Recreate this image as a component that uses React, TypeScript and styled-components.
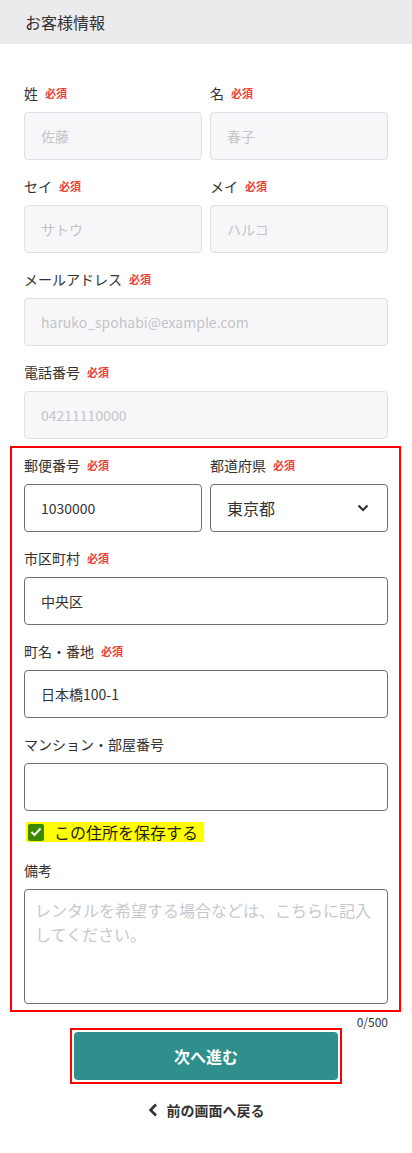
import styled, { createGlobalStyle } from 'styled-components'

const GlobalStyle = createGlobalStyle`
    body {
        margin: 0;
        background: #fff;
        font-family: "Noto Sans CJK JP", "Noto Sans", sans-serif;
        color: #333;
    }
    * { box-sizing: border-box; }
`

export default function App() {
    return <Page>
        <GlobalStyle/>
        <Header>お客様情報</Header>
        <Form>
            <Stack>
                <Row>
                    <Field label="姓" required><Input disabled placeholder="佐藤"/></Field>
                    <Field label="名" required><Input disabled placeholder="春子"/></Field>
                </Row>
                <Row>
                    <Field label="セイ" required><Input disabled placeholder="サトウ"/></Field>
                    <Field label="メイ" required><Input disabled placeholder="ハルコ"/></Field>
                </Row>
                <Field label="メールアドレス" required>
                    <Input disabled placeholder="haruko_spohabi@example.com"/>
                </Field>
                <Field label="電話番号" required>
                    <Input disabled placeholder="04211110000"/>
                </Field>
            </Stack>

            <Highlight>
                <Stack>
                    <Row>
                        <Field label="郵便番号" required><Input defaultValue="1030000"/></Field>
                        <Field label="都道府県" required>
                            <SelectBox>
                                <span>東京都</span>
                                <svg width="12" height="8" viewBox="0 0 12 8">
                                    <polyline points="1.5,1.5 6,6 10.5,1.5" fill="none" stroke="#333" strokeWidth="2.2"/>
                                </svg>
                            </SelectBox>
                        </Field>
                    </Row>
                    <Field label="市区町村" required><Input defaultValue="中央区"/></Field>
                    <Field label="町名・番地" required><Input defaultValue="日本橋100-1"/></Field>
                    <Field label="マンション・部屋番号"><Input/></Field>
                </Stack>
                <SaveCheck>
                    <Box>
                        <svg width="12" height="10" viewBox="0 0 12 10">
                            <polyline points="1.5,5 4.5,8 10.5,1.5" fill="none" stroke="#fff" strokeWidth="2"/>
                        </svg>
                    </Box>
                    この住所を保存する
                </SaveCheck>
                <Field label="備考">
                    <Notes placeholder="レンタルを希望する場合などは、こちらに記入してください。"/>
                </Field>
            </Highlight>
            <Counter>0/500</Counter>

            <ButtonFrame>
                <NextButton>次へ進む</NextButton>
            </ButtonFrame>

            <BackLink>
                <svg width="10" height="14" viewBox="0 0 10 14">
                    <polyline points="8,1.5 2.5,7 8,12.5" fill="none" stroke="#333" strokeWidth="2.6"/>
                </svg>
                前の画面へ戻る
            </BackLink>
        </Form>
    </Page>
}

function Field({label, required, children}: {label: string, required?: boolean, children: React.ReactNode}) {
    return <FieldWrap>
        <Label>
            {label}
            {required && <Required>必須</Required>}
        </Label>
        {children}
    </FieldWrap>
}

const Page = styled.div`
    width: 412px;
    min-height: 1153px;
`

const Header = styled.div`
    height: 44px;
    display: flex;
    align-items: center;
    padding-left: 25px;
    background: #ebebed;
    font-size: 16px;
    color: #333;
`

const Form = styled.div`
    display: flex;
    flex-direction: column;
    padding: 39px 24px 0;
`

const Stack = styled.div`
    display: flex;
    flex-direction: column;
    gap: 16px;
`

const Row = styled.div`
    display: grid;
    grid-template-columns: 1fr 1fr;
    gap: 8px;
`

const FieldWrap = styled.div`
    display: flex;
    flex-direction: column;
`

const Label = styled.div`
    display: flex;
    align-items: center;
    gap: 7px;
    height: 20px;
    margin-bottom: 9px;
    font-size: 14px;
    color: #333;
`

const Required = styled.span`
    font-size: 11px;
    font-weight: 700;
    color: #e8423f;
`

const Input = styled.input`
    height: 48px;
    width: 100%;
    padding: 0 16px;
    border: 1px solid #707070;
    border-radius: 4px;
    background: #fff;
    font-family: inherit;
    font-size: 14px;
    color: #333;
    outline: none;

    &:disabled {
        border-color: #e0e0e4;
        background: #f7f7f9;
    }

    &::placeholder {
        color: #c4c4c8;
    }
`

const SelectBox = styled.div`
    height: 48px;
    display: flex;
    align-items: center;
    justify-content: space-between;
    padding: 0 18px 0 16px;
    border: 1px solid #707070;
    border-radius: 4px;
    font-size: 16px;
    color: #333;
`

const Highlight = styled.div`
    display: flex;
    flex-direction: column;
    margin: 7px -13px 0 -14px;
    padding: 7px 11px 6px 12px;
    border: 2px solid #ff0000;
`

const SaveCheck = styled.label`
    display: flex;
    align-items: center;
    gap: 10px;
    width: 178px;
    height: 20px;
    margin: 11px 0 18px 2px;
    padding-left: 2px;
    background: #ffff00;
    font-size: 16px;
    color: #222;
`

const Box = styled.span`
    width: 16px;
    height: 17px;
    display: flex;
    align-items: center;
    justify-content: center;
    border-radius: 2px;
    background: #3a8a00;
`

const Notes = styled.textarea`
    height: 115px;
    width: 100%;
    padding: 8px 10px;
    border: 1px solid #707070;
    border-radius: 4px;
    font-family: inherit;
    font-size: 16px;
    line-height: 24px;
    color: #333;
    resize: none;
    outline: none;

    &::placeholder {
        color: #c8c8cc;
    }
`

const Counter = styled.div`
    margin-top: 3px;
    height: 13px;
    line-height: 13px;
    text-align: right;
    font-size: 12px;
    color: #333;
`

const ButtonFrame = styled.div`
    align-self: center;
    padding: 2px;
    border: 2px solid #ff0000;
`

const NextButton = styled.button`
    width: 264px;
    height: 48px;
    border: none;
    border-radius: 4px;
    background: #2e8f8c;
    font-family: inherit;
    font-size: 16px;
    font-weight: 700;
    color: #fff;
`

const BackLink = styled.a`
    align-self: center;
    display: flex;
    align-items: center;
    gap: 9px;
    margin-top: 16px;
    height: 20px;
    font-size: 14px;
    font-weight: 700;
    color: #333;
`
